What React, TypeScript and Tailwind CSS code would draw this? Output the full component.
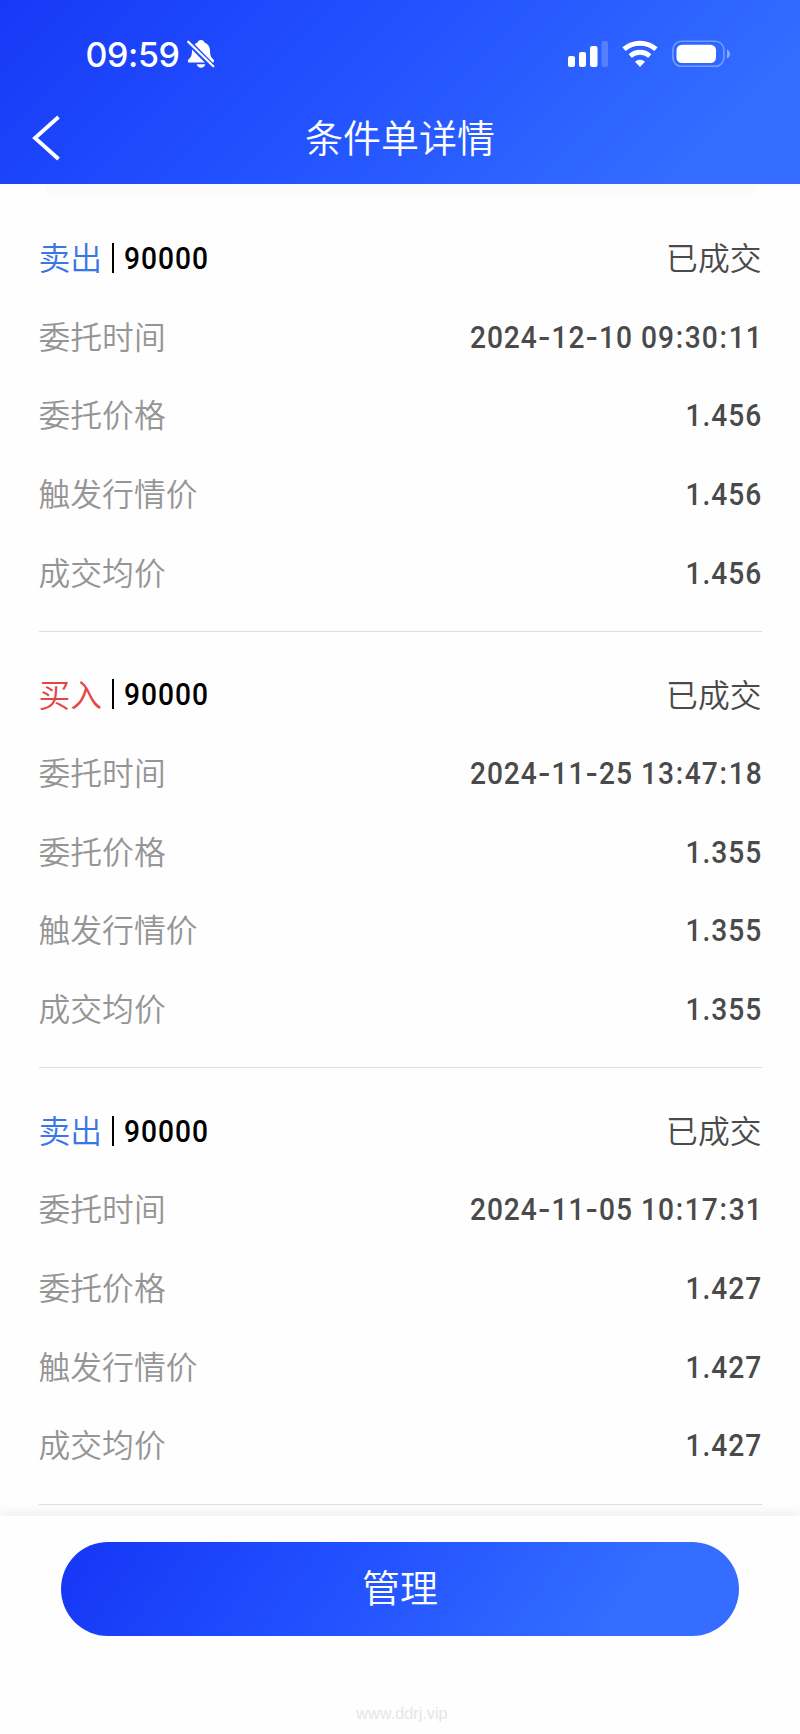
import type { ReactNode } from "react";

type Order = { side: "卖出" | "买入"; qty: string; time: string; price: string };

const orders: Order[] = [
  { side: "卖出", qty: "90000", time: "2024-12-10 09:30:11", price: "1.456" },
  { side: "买入", qty: "90000", time: "2024-11-25 13:47:18", price: "1.355" },
  { side: "卖出", qty: "90000", time: "2024-11-05 10:17:31", price: "1.427" },
];

function StatusBar() {
  return (
    <div className="flex h-[108px] items-center justify-between pl-[85.5px] pr-[70px]">
      <div className="flex items-center text-white">
        <span className="w-[100px] whitespace-nowrap pt-[1px] font-['Inter',sans-serif] text-[34px] font-medium leading-none tracking-[-0.4px]">
          09:59
        </span>
        <svg className="ml-[1px]" width="28" height="30" viewBox="0 0 28 30" fill="white">
          <path d="M14 1c-1.8 0-3.1.9-3.5 2.4C7 4.700 5.100 7.500 5 11.500c-.1 4.500-.7 6.500-3.500 9-.8.8-.9 3 .6 3h23.800c1.500 0 1.400-2.200.6-3-2.800-2.500-3.400-4.500-3.500-9-.1-4-2-6.800-5.500-8.100C17.100 1.900 15.800 1 14 1z" />
          <path d="M9.700 25.200h8.600c-.5 2.100-2.200 3.600-4.300 3.600s-3.800-1.500-4.300-3.600z" />
          <path d="M-1 0.500L28 30" stroke="#204dfb" strokeWidth="5.500" />
          <path d="M1.200 2.700L26.300 27.200" stroke="white" strokeWidth="2.200" strokeLinecap="round" />
        </svg>
      </div>
      <div className="flex items-center">
        <svg width="42" height="28" viewBox="0 0 42 28" fill="white">
          <rect x="1" y="16" width="7" height="11" rx="2" />
          <rect x="12" y="12" width="7" height="15" rx="2" />
          <rect x="23" y="6" width="7.500" height="21" rx="2" />
          <rect x="34.500" y="1" width="6.500" height="26" rx="2" opacity="0.2" />
        </svg>
        <svg className="ml-[13px]" width="36" height="28" viewBox="0 0 36 28" fill="none" stroke="white">
          <path d="M2 9.200C11 1.200 25 1.200 34 9.200" strokeWidth="5" />
          <path d="M8.200 16C14 11 22 11 27.800 16" strokeWidth="4.800" />
          <path d="M18 27l-5-5.200c2.700-2.700 7.300-2.700 10 0z" fill="white" stroke="none" />
        </svg>
        <svg className="ml-[14px]" width="58" height="28" viewBox="0 0 58 28">
          <rect x="0.900" y="1.300" width="51" height="25" rx="8.500" fill="none" stroke="white" strokeOpacity="0.35" strokeWidth="1.600" />
          <rect x="4.500" y="4.700" width="39.500" height="18.300" rx="5.500" fill="white" />
          <path d="M55 9.500v9c1.700-.7 3-2.500 3-4.500s-1.300-3.800-3-4.500z" fill="white" opacity="0.45" />
        </svg>
      </div>
    </div>
  );
}

function Row({ label, children }: { label: ReactNode; children: ReactNode }) {
  return (
    <div className="flex h-[78.7px] items-center justify-between text-[31.800px] leading-none">
      <span className="text-[#959595]">{label}</span>
      <span className="text-[#4a4a4a]">{children}</span>
    </div>
  );
}

function Label({ children }: { children: ReactNode }) {
  return <span className="block pb-[2px]">{children}</span>;
}

function Num({ children }: { children: string }) {
  return (
    <span className="-mr-[1px] block origin-right scale-x-[0.88] whitespace-nowrap font-['Roboto',sans-serif] text-[32px] font-medium tracking-[1.1px]">
      {children.split(/([-:])/).map((part, i) => {
        if (part === "-") {
          return (
            <span key={i} className="ml-[2px] mr-[1.500px] inline-block scale-x-[1.25]">
              -
            </span>
          );
        }
        if (part === ":") {
          return (
            <span key={i} className="mx-[0.900px]">
              :
            </span>
          );
        }
        return part;
      })}
    </span>
  );
}

function OrderBlock({ order }: { order: Order }) {
  return (
    <section className="h-[436.4px] border-b border-[#dedede] pt-[23px]">
      <Row
        label={
          <span className="flex items-center">
            <span className={order.side === "卖出" ? "pb-[1px] text-[#3a76e8]" : "pb-[1px] text-[#e54545]"}>
              {order.side}
            </span>
            <span className="ml-[9.500px] h-[30px] w-[2px] bg-black" />
            <span className="ml-[10px] block origin-left scale-x-[0.88] font-['Roboto',sans-serif] text-[32px] font-medium tracking-[1.1px] text-black">
              {order.qty}
            </span>
          </span>
        }
      >
        <span className="block pb-[1px]">已成交</span>
      </Row>
      <Row label={<Label>委托时间</Label>}>
        <Num>{order.time}</Num>
      </Row>
      <Row label={<Label>委托价格</Label>}>
        <Num>{order.price}</Num>
      </Row>
      <Row label={<Label>触发行情价</Label>}>
        <Num>{order.price}</Num>
      </Row>
      <Row label={<Label>成交均价</Label>}>
        <Num>{order.price}</Num>
      </Row>
    </section>
  );
}

export default function App() {
  return (
    <div className="flex h-[1734px] w-[800px] flex-col overflow-hidden bg-[#fefefe] font-['Noto_Sans_CJK_SC',sans-serif] font-[350]">
      <header className="h-[183.500px] shrink-0 bg-[linear-gradient(135deg,#1739f6_0%,#2251ff_42%,#346dff_88%,#346dff_100%)]">
        <StatusBar />
        <div className="grid h-[60px] grid-cols-[100px_1fr_100px] items-center">
          <svg className="ml-[32px]" width="28" height="46" viewBox="0 0 28 46" fill="none" stroke="white" strokeWidth="3.800">
            <path d="M26.500 2L3 23L26.500 44" />
          </svg>
          <h1 className="pb-[4px] text-center text-[38px] font-[350] leading-none text-white">条件单详情</h1>
        </div>
      </header>
      <main className="h-[1332.500px] shrink-0 overflow-hidden px-[38.500px]">
        <div className="mx-[6px] h-[12px] rounded-b-xl bg-[#fbfcfa]" />
        {orders.map((o) => (
          <OrderBlock key={o.time} order={o} />
        ))}
      </main>
      <footer className="relative flex grow flex-col items-center bg-[#fefefe] pt-[25.500px] shadow-[0_-2px_12px_rgba(0,0,0,0.08)]">
        <button className="h-[94.500px] w-[678px] rounded-full bg-[linear-gradient(125deg,#1739f6_5%,#2251ff_42%,#346dff_82%,#346dff_100%)] pb-[6px] text-[38px] font-[350] leading-none text-white">
          管理
        </button>
        <div className="mt-[69px] pl-[4px] font-['Liberation_Sans',sans-serif] text-[16.300px] font-normal leading-none text-[#e6e6e6]">
          www.ddrj.vip
        </div>
      </footer>
    </div>
  );
}
